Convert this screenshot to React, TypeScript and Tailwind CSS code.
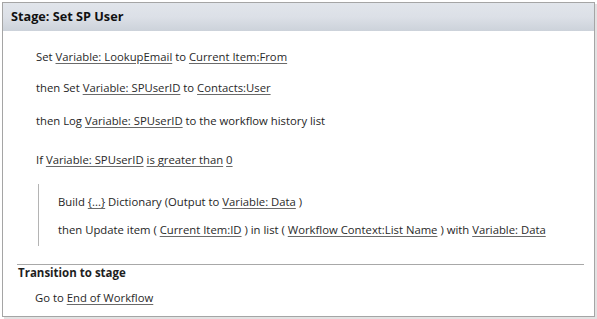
const Link = ({ children }: { children: React.ReactNode }) => (
  <span className="underline decoration-[#6a6a6a] underline-offset-[2px] text-[#2a2a2a]">
    {children}
  </span>
);

const App = () => {
  return (
    <div className="w-[597px] h-[319px] bg-white pt-[2px] pl-[2px] font-['Open_Sans',sans-serif] text-[#1e1e1e]">
      <div className="w-[593px] h-[315px] border border-[#a5a5a5] shadow-[2px_2px_0_#e2e2e2] bg-white">
        {/* Stage header */}
        <div className="h-[28px] flex items-center pl-[8px] bg-gradient-to-b from-[#e1e5eb] via-[#dce0e7] to-[#ccd2da] font-bold text-[12.7px] text-[#111]">
          Stage: Set SP User
        </div>

        {/* Actions */}
        <div className="pl-[33px] text-[11.3px] leading-4">
          <div className="mt-[18px]">
            Set <Link>Variable: LookupEmail</Link> to <Link>Current Item:From</Link>
          </div>
          <div className="mt-[15px]">
            then Set <Link>Variable: SPUserID</Link> to <Link>Contacts:User</Link>
          </div>
          <div className="mt-[17px]">
            then Log <Link>Variable: SPUserID</Link> to the workflow history list
          </div>
          <div className="mt-[23px]">
            If <Link>Variable: SPUserID</Link> <Link>is greater than</Link> <Link>0</Link>
          </div>
        </div>

        {/* If block */}
        <div className="ml-[35px] mt-[16px] border-l border-[#b4b4b4] pl-[19px] pt-[10px] pb-[8px] text-[11.3px] leading-4">
          <div>
            Build <Link>{"{...}"}</Link> Dictionary (Output to <Link>Variable: Data</Link> )
          </div>
          <div className="mt-[12px]">
            then Update item ( <Link>Current Item:ID</Link> ) in list ({" "}
            <Link>Workflow Context:List Name</Link> ) with <Link>Variable: Data</Link>
          </div>
        </div>

        {/* Transition */}
        <div className="ml-[14px] w-[567px] mt-[18px] border-t border-[#a8a8a8]" />
        <div className="pl-[15px] text-[11.5px] leading-4 font-bold">Transition to stage</div>
        <div className="pl-[32px] mt-[9px] text-[11.3px] leading-4">
          Go to <Link>End of Workflow</Link>
        </div>
      </div>
    </div>
  );
};

export default App;
